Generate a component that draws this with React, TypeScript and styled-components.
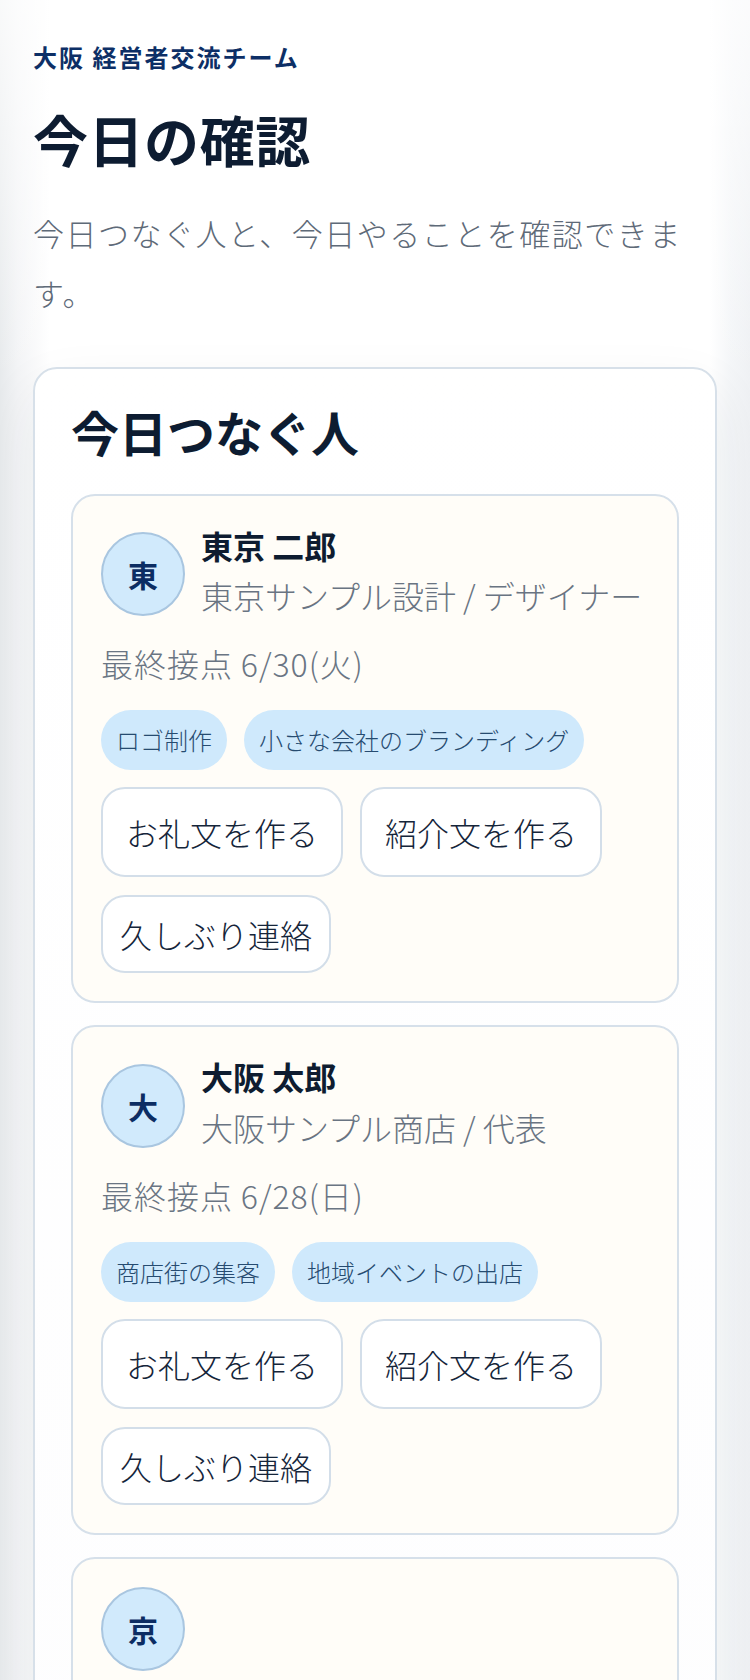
import React from "react";
import styled, { createGlobalStyle } from "styled-components";

const GlobalStyle = createGlobalStyle`
  *, *::before, *::after { box-sizing: border-box; }
  html, body { margin: 0; padding: 0; }
  body {
    min-height: 100vh;
    font-family: "Noto Sans CJK JP", "Noto Sans", sans-serif;
    color: #0e1c30;
    background:
      linear-gradient(180deg, rgba(255,255,255,0.75) 0px, rgba(255,255,255,0) 380px),
      linear-gradient(90deg, #e7eaec 0px, #f3f4f6 18px, rgba(255,255,255,0) 50px),
      linear-gradient(270deg, #eff1f4 0px, #f4f6f8 20px, rgba(255,255,255,0) 40px),
      #ffffff;
  }
`;

const Page = styled.main`
  padding: 40px 33px 0;
`;

const TeamLabel = styled.p`
  margin: 0 0 30px;
  font-size: 24px;
  line-height: 1.42;
  font-weight: 700;
  letter-spacing: 2px;
  color: #0d2f66;
`;

const Title = styled.h1`
  margin: 0 0 30px;
  font-size: 55px;
  line-height: 1.25;
  font-weight: 700;
  letter-spacing: 0.01em;
  color: #0d1c31;
`;

const Lead = styled.p`
  margin: 0 0 44px;
  font-size: 31px;
  line-height: 60px;
  font-weight: 300;
  letter-spacing: 1.5px;
  color: #5e6a78;
`;

const Panel = styled.section`
  background: linear-gradient(180deg, #ffffff 0%, #fdfdfe 100%);
  border: 2px solid #d7e0e9;
  border-radius: 24px;
  padding: 36px;
  box-shadow: 0 24px 60px rgba(20, 38, 60, 0.07);
`;

const PanelTitle = styled.h2`
  margin: 0 0 36px;
  font-size: 48px;
  line-height: 1.1;
  font-weight: 700;
  color: #0d1c31;
`;

const PersonList = styled.div`
  display: flex;
  flex-direction: column;
  gap: 22px;
`;

const PersonCard = styled.article`
  background: #fffdf8;
  border: 2px solid #d6e0ea;
  border-radius: 24px;
  padding: 28px;
`;

const PersonHeader = styled.div`
  display: flex;
  align-items: center;
  gap: 16px;
  margin-bottom: 15px;
`;

const Avatar = styled.div`
  flex-shrink: 0;
  width: 84px;
  height: 84px;
  border-radius: 50%;
  background: #d1eafc;
  border: 2px solid #a9c6e0;
  display: flex;
  align-items: center;
  justify-content: center;
  font-size: 30px;
  font-weight: 700;
  color: #0c2d63;
`;

const PersonText = styled.div`
  display: flex;
  flex-direction: column;
  min-width: 0;
`;

const Name = styled.h3`
  margin: 0;
  font-size: 32px;
  line-height: 1.35;
  font-weight: 700;
  color: #0e1c30;
`;

const Role = styled.p`
  margin: 0;
  font-size: 32px;
  line-height: 1.8;
  font-weight: 300;
  color: #697482;
`;

const Contact = styled.p`
  margin: 0 0 23px;
  font-size: 32px;
  line-height: 1.5;
  font-weight: 300;
  letter-spacing: 0.03em;
  color: #6a7583;
`;

const TagRow = styled.div`
  display: flex;
  flex-wrap: wrap;
  gap: 17px;
  margin-bottom: 17px;
`;

const Tag = styled.span`
  display: inline-block;
  padding: 12px 15px;
  border-radius: 999px;
  background: #cfe9fc;
  color: #264b70;
  font-size: 24px;
  line-height: 1.5;
  font-weight: 300;
`;

const ActionRow = styled.div`
  display: flex;
  flex-wrap: wrap;
  gap: 18px 17px;
`;

const ActionButton = styled.button<{ $size: "large" | "small" }>`
  appearance: none;
  margin: 0;
  font-family: inherit;
  font-size: 32px;
  line-height: 1.5;
  font-weight: 300;
  color: #15253a;
  background: #ffffff;
  border: 2px solid #d3dee9;
  border-radius: 24px;
  padding: ${(p) => (p.$size === "large" ? "19px 23px" : "13px 17px")};
  cursor: pointer;
`;

type Person = {
  initial: string;
  name?: string;
  role?: string;
  lastContact: string;
  tags: string[];
};

const people: Person[] = [
  {
    initial: "東",
    name: "東京 二郎",
    role: "東京サンプル設計 / デザイナー",
    lastContact: "最終接点 6/30(火)",
    tags: ["ロゴ制作", "小さな会社のブランディング"],
  },
  {
    initial: "大",
    name: "大阪 太郎",
    role: "大阪サンプル商店 / 代表",
    lastContact: "最終接点 6/28(日)",
    tags: ["商店街の集客", "地域イベントの出店"],
  },
  {
    initial: "京",
    lastContact: "最終接点 6/25(木)",
    tags: ["町家の活用", "観光案内"],
  },
];

const actions: { label: string; size: "large" | "small" }[] = [
  { label: "お礼文を作る", size: "large" },
  { label: "紹介文を作る", size: "large" },
  { label: "久しぶり連絡", size: "small" },
];

export default function App() {
  return (
    <>
      <GlobalStyle />
      <Page>
        <TeamLabel>大阪 経営者交流チーム</TeamLabel>
        <Title>今日の確認</Title>
        <Lead>今日つなぐ人と、今日やることを確認できます。</Lead>
        <Panel>
          <PanelTitle>今日つなぐ人</PanelTitle>
          <PersonList>
            {people.map((p) => (
              <PersonCard key={p.initial}>
                <PersonHeader>
                  <Avatar>{p.initial}</Avatar>
                  {p.name && (
                    <PersonText>
                      <Name>{p.name}</Name>
                      <Role>{p.role}</Role>
                    </PersonText>
                  )}
                </PersonHeader>
                <Contact>{p.lastContact}</Contact>
                <TagRow>
                  {p.tags.map((t) => (
                    <Tag key={t}>{t}</Tag>
                  ))}
                </TagRow>
                <ActionRow>
                  {actions.map((a) => (
                    <ActionButton key={a.label} type="button" $size={a.size}>
                      {a.label}
                    </ActionButton>
                  ))}
                </ActionRow>
              </PersonCard>
            ))}
          </PersonList>
        </Panel>
      </Page>
    </>
  );
}
